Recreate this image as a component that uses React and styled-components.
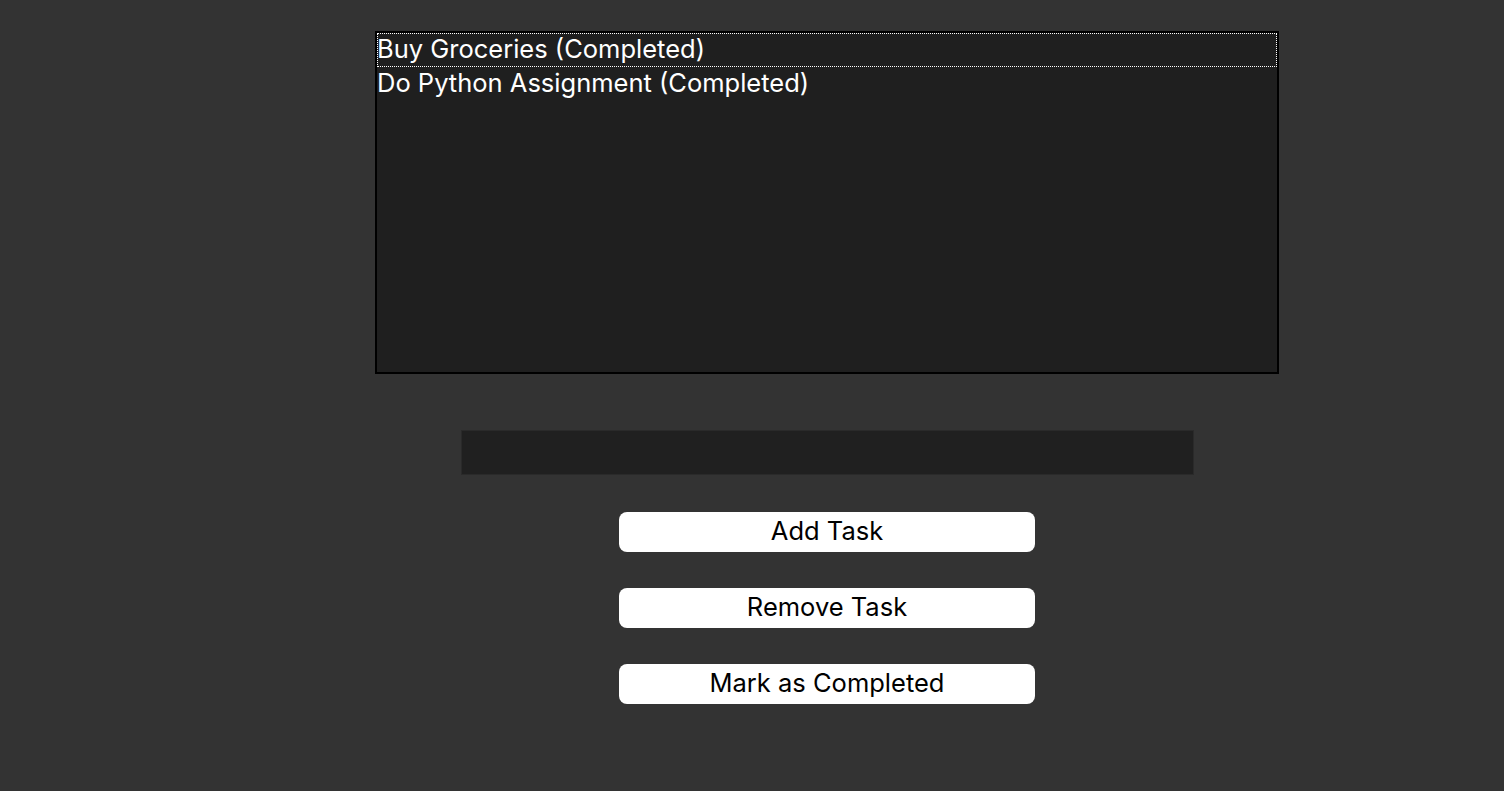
import React from "react";
import styled, { createGlobalStyle } from "styled-components";

const Global = createGlobalStyle`
  html, body { margin: 0; padding: 0; background: #333333; }
  body { font-family: Inter, "Open Sans", "Liberation Sans", sans-serif; }
`;

const Page = styled.div`
  width: 1504px;
  height: 791px;
  box-sizing: border-box;
  padding: 31px 0 0 150px;
  display: flex;
  flex-direction: column;
  align-items: center;
  background: #333333;
`;

const ListBox = styled.div`
  width: 904px;
  height: 343px;
  box-sizing: border-box;
  border: 2px solid #000;
  background: #1f1f1f;
  display: flex;
  flex-direction: column;
`;

const Row = styled.div`
  height: 34px;
  flex: none;
  box-sizing: border-box;
  display: flex;
  align-items: center;
  color: #ffffff;
  font-size: 25.5px;
  line-height: 32px;
  padding-bottom: 2px;
  white-space: nowrap;
  outline: ${(p) => (p.$focused ? "1px dotted #ffffff" : "none")};
  outline-offset: -1px;
`;

const Entry = styled.div`
  margin-top: 56px;
  width: 733px;
  height: 45px;
  box-sizing: border-box;
  background: #202020;
  border: 1px solid #2a2a2a;
`;

const Buttons = styled.div`
  margin-top: 37px;
  display: flex;
  flex-direction: column;
  gap: 36px;
`;

const Button = styled.button`
  width: 416px;
  height: 40px;
  border: none;
  border-radius: 8px;
  background: #ffffff;
  color: #000000;
  font-family: Inter, "Open Sans", "Liberation Sans", sans-serif;
  font-size: 25.5px;
  line-height: 1;
  padding: 0 0 2px;
  display: flex;
  align-items: center;
  justify-content: center;
  cursor: pointer;
`;

export default function App() {
  return (
    <>
      <Global />
      <Page>
        <ListBox>
          <Row $focused>Buy Groceries (Completed)</Row>
          <Row>Do Python Assignment (Completed)</Row>
        </ListBox>
        <Entry />
        <Buttons>
          <Button>Add Task</Button>
          <Button>Remove Task</Button>
          <Button>Mark as Completed</Button>
        </Buttons>
      </Page>
    </>
  );
}
